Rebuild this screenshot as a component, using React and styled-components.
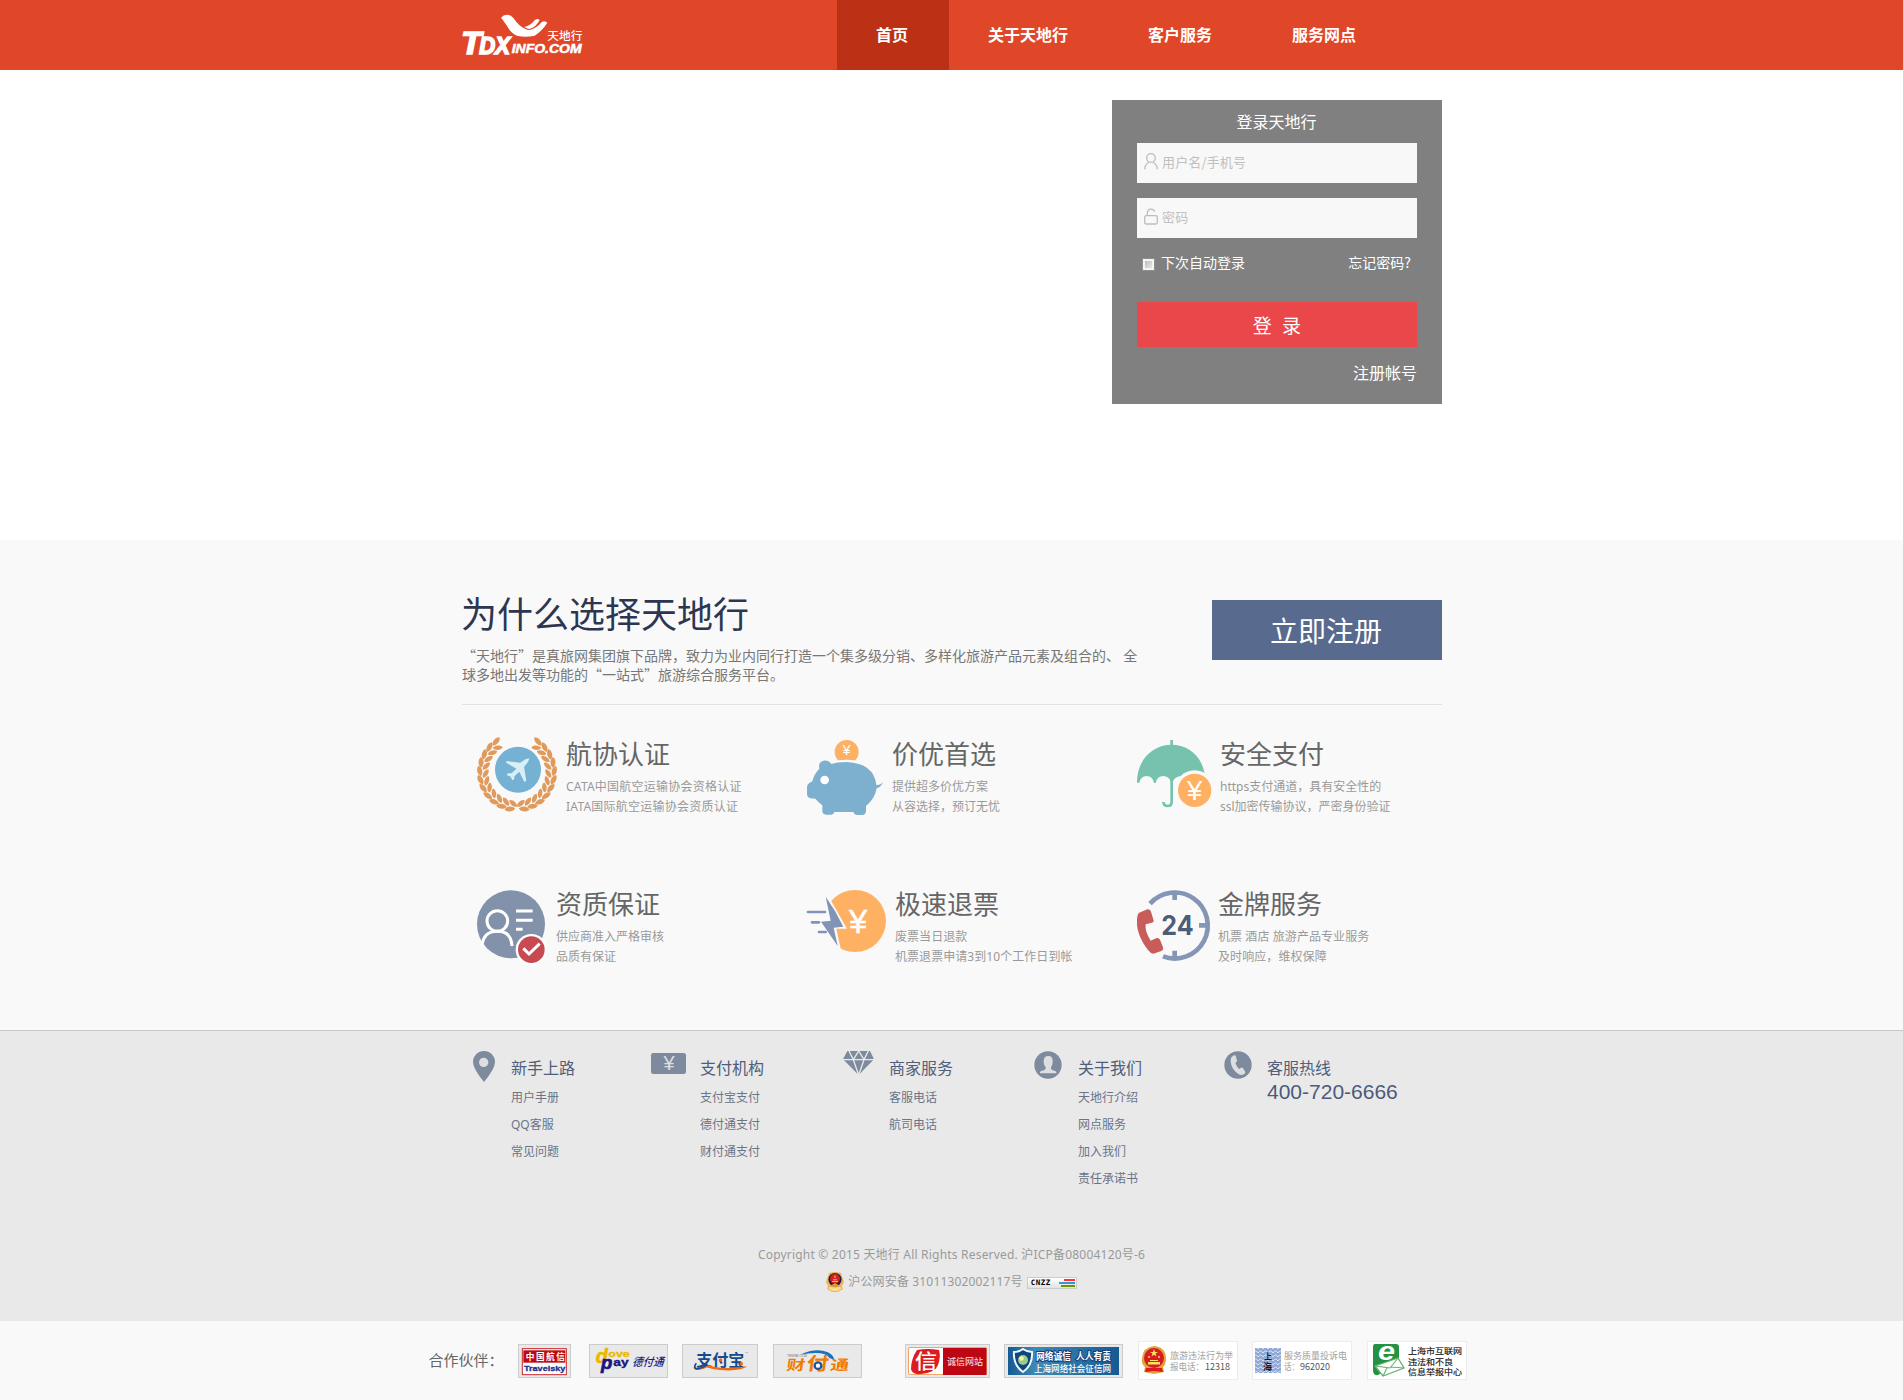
import React from "react";
import styled, { createGlobalStyle } from "styled-components";

const Global = createGlobalStyle`
  * { box-sizing: border-box; }
  body { margin: 0; background: #fff; font-family: "Noto Sans", "Noto Sans CJK SC", sans-serif; font-size: 12px; color: #666; }
  h1, h2, h3, p, ul { margin: 0; padding: 0; font-weight: 400; }
  ul { list-style: none; }
  a { color: inherit; text-decoration: none; }
  svg { display: block; flex: none; overflow: visible; }
`;

const CJK = `"Noto Sans CJK SC", "Noto Sans", sans-serif`;

const Container = styled.div`
  width: 980px;
  margin-left: calc(50% - 489.5px);
`;

/* ---------- header ---------- */
const Header = styled.header`
  height: 70px;
  background: #e04729;
`;
const HeaderInner = styled(Container)`
  display: flex;
  height: 70px;
`;
const LogoLink = styled.a`
  width: 375px;
  padding-top: 13px;
`;
const Nav = styled.nav`
  display: flex;
`;
const NavItem = styled.a`
  height: 70px;
  padding: 0 41px 0 39px;
  font: 700 16px/68px ${CJK};
  color: #fff;
  background: ${(p) => (p.$active ? "#bc3115" : "transparent")};
`;

/* ---------- login ---------- */
const Hero = styled.section`
  height: 470px;
  padding-top: 30px;
`;
const HeroInner = styled(Container)`
  display: flex;
  justify-content: flex-end;
`;
const LoginBox = styled.form`
  width: 330px;
  height: 304px;
  padding: 1px 25px 0;
  background: #808080;
  color: #fff;
`;
const LoginTitle = styled.h2`
  height: 42px;
  font: 400 16px/41px ${CJK};
  text-align: center;
  text-indent: -1px;
`;
const Field = styled.label`
  display: flex;
  height: 40px;
  margin-bottom: 15px;
  padding: 10px 7px;
  background: #f8f8f8;
`;
const FieldInput = styled.input`
  flex: 1;
  min-width: 0;
  height: 17px;
  margin-left: 4px;
  padding: 0;
  border: 0;
  outline: 0;
  background: transparent;
  font: 13px/17px ${CJK};
  letter-spacing: 0.15px;
  &::placeholder { color: #c0c0c0; opacity: 1; }
`;
const Options = styled.div`
  display: flex;
  align-items: center;
  height: 50px;
  margin-top: -15px;
  padding: 0 6px 2px 5px;
  font: 14px/20px ${CJK};
`;
const Check = styled.input`
  appearance: none;
  width: 13px;
  height: 13px;
  margin: 5px 6px 0 0;
  border: 1px solid #8e8f8f;
  outline: 2px solid #f4f4f4;
  outline-offset: -3px;
  background: linear-gradient(135deg, #aeb3b9, #f2f2f2);
`;
const Forgot = styled.a`
  margin-left: auto;
`;
const Submit = styled.button`
  display: block;
  width: 280px;
  height: 45px;
  margin-top: 14px;
  padding: 0;
  border: 0;
  background: #ea474b;
  color: #fff;
  font: 19px/40px ${CJK};
  word-spacing: 6px;
`;
const Register = styled.a`
  display: block;
  font: 16px/50px ${CJK};
  text-align: right;
`;

/* ---------- why ---------- */
const Why = styled.section`
  height: 490px;
  background: #f9f9f9;
`;
const Intro = styled.div`
  display: flex;
  justify-content: space-between;
  height: 165px;
  border-bottom: 1px solid #e2e2e2;
`;
const IntroTitle = styled.h1`
  margin: 47px 0 0 -1px;
  font: 400 36px/50px ${CJK};
  color: #2d3650;
`;
const IntroText = styled.p`
  margin-top: 9px;
  font: 14px/19px ${CJK};
  color: #777;
  white-space: pre;
`;
const JoinButton = styled.a`
  width: 230px;
  height: 60px;
  margin-top: 60px;
  padding-right: 2px;
  background: #586a8e;
  color: #fff;
  font: 28px/61px ${CJK};
  text-align: center;
`;
const Features = styled.div`
  display: grid;
  grid-template-columns: repeat(3, 330px);
  grid-template-rows: 150px 140px;
  padding: 35px 0 0 15px;
  margin-right: -25px;
`;
const Feature = styled.article`
  display: flex;
`;
const FeatureIcon = styled.div`
  width: ${(p) => p.$w}px;
  flex: none;
`;
const FeatureTitle = styled.h3`
  margin: -1px 0 10px;
  font: 400 26px/28px ${CJK};
  color: #666;
`;
const FeatureLine = styled.p`
  line-height: 20px;
  letter-spacing: ${(p) => p.$track || 0}px;
  color: #999;
`;

/* ---------- footer ---------- */
const Footer = styled.footer`
  height: 291px;
  border-top: 1px solid #c8c8c8;
  background: #e9e9e9;
`;
const Columns = styled(Container)`
  display: grid;
  grid-template-columns: repeat(5, 189px);
  height: 210px;
  padding-top: 20px;
`;
const Column = styled.div`
  display: flex;
`;
const ColumnIcon = styled.div`
  width: 49px;
  flex: none;
  padding-left: ${(p) => p.$left}px;
  padding-top: ${(p) => p.$top || 0}px;
`;
const ColumnTitle = styled.h3`
  margin: 4px 0 5px;
  font: 400 16px/24px ${CJK};
  color: #4f5e7b;
`;
const ColumnLink = styled.a`
  display: block;
  line-height: 27px;
  color: #6a7488;
`;
const Hotline = styled.p`
  margin-top: -4px;
  font: 21px/24px "Liberation Sans", sans-serif;
  color: #4a5b7c;
`;
const Legal = styled.p`
  display: flex;
  justify-content: center;
  align-items: center;
  height: 27px;
  line-height: 27px;
  letter-spacing: ${(p) => p.$track}px;
  color: #999;
  white-space: pre;
`;
const Record = styled.span`
  margin: 0 4px;
`;
const Cnzz = styled.span`
  display: flex;
  align-items: center;
  justify-content: space-between;
  width: 50px;
  height: 12px;
  margin-top: 2px;
  padding-left: 3px;
  border: 1px solid #ccc;
  background: linear-gradient(#fff, #e2e2e2);
  color: #000;
  font: 700 7.5px/10px "DejaVu Sans Mono", monospace;
  letter-spacing: 0.5px;
`;

/* ---------- partners ---------- */
const Partners = styled.section`
  display: flex;
  align-items: center;
  height: 79px;
  padding-left: calc(50% - 523px);
  background: #f9f9f9;
`;
const PartnerLabel = styled.span`
  width: 89px;
  padding-bottom: 2px;
  font: 15px/30px ${CJK};
  color: #666;
`;
const Partner = styled.a`
  flex: none;
  width: ${(p) => p.$w}px;
  height: ${(p) => (p.$light ? 39 : 34)}px;
  margin-right: ${(p) => p.$gap}px;
  border: 1px solid ${(p) => (p.$light ? "#ececec" : "#ccc")};
  background: ${(p) => (p.$light ? "#fff" : "#e9e9e9")};
`;

/* ---------- drawings ---------- */
const T = ({ children, ...p }) => (
  <text fontFamily='"Noto Sans CJK SC", sans-serif' lengthAdjust="spacingAndGlyphs" {...p}>{children}</text>
);
const L = ({ children, ...p }) => (
  <text fontFamily='"Liberation Sans", sans-serif' lengthAdjust="spacingAndGlyphs" {...p}>{children}</text>
);

const Logo = () => (
  <svg width="122" height="43" viewBox="66 39 366 129" fill="#fff">
    <path d="M183 54Q189 44 203 44Q213 45 220 54Q238 80 256 87Q266 92 276 88Q296 79 305 66Q315 60 322 68Q306 93 284 107Q258 113 234 108Q220 104 208 89Q192 63 183 54Z" />
    <path d="M253 81Q272 76 284 61Q292 54 299 60Q289 81 268 87Q258 86 253 81Z" />
    <L x="64" y="161" fontSize="94" fontWeight="700" fontStyle="italic" textLength="60" stroke="#fff" strokeWidth="5">T</L>
    <L x="118" y="161" fontSize="70" fontWeight="700" fontStyle="italic" textLength="92" stroke="#fff" strokeWidth="5">DX</L>
    <L x="215" y="158" fontSize="38" fontWeight="700" fontStyle="italic" textLength="210" stroke="#fff" strokeWidth="1.5">INFO.COM</L>
    <T x="322" y="121" fontSize="35" fontWeight="500" textLength="105">天地行</T>
  </svg>
);

const UserIcon = () => (
  <svg width="14" height="17" viewBox="0 0 14 17" fill="none" stroke="#bdbdbd" strokeWidth="1.3">
    <circle cx="7" cy="5" r="4.3" />
    <path d="M.7 16.2C.7 12.5 3 10.3 5 9.2M13.3 16.2C13.3 12.5 11 10.3 9 9.2" />
  </svg>
);
const LockIcon = () => (
  <svg width="14" height="17" viewBox="0 0 14 17" fill="none" stroke="#bdbdbd" strokeWidth="1.3">
    <rect x=".7" y="7.6" width="12.6" height="8.4" rx="1.5" />
    <path d="M3.4 7.4V4.4A3.7 3.7 0 0 1 10.6 3.7" />
  </svg>
);

const leafAngles = [236, 222.5, 209, 195.5, 182, 168.5, 155, 141.5, 128, 114.5, 101];
const Branch = () =>
  leafAngles.map((a) => {
    const r = (a * Math.PI) / 180;
    const at = (d, shift) => {
      const q = r + shift;
      return `translate(${201 + Math.cos(q) * d} ${577 + Math.sin(q) * d})`;
    };
    return (
      <g key={a}>
        <path transform={`${at(112, 0)} rotate(${a + 74})`} d="M-16 0C-9-10 9-10 16 0C9 10-9 10-16 0Z" />
        <path transform={`${at(94, -0.07)} rotate(${a + 120})`} d="M-15 0C-9-9 9-9 15 0C9 9-9 9-15 0Z" />
      </g>
    );
  });
const LaurelIcon = () => (
  <svg width="80" height="70" viewBox="81 480 240 210">
    <g fill="#e09a5b">
      <Branch />
      <g transform="translate(402 0) scale(-1 1)"><Branch /></g>
    </g>
    <circle cx="204" cy="569" r="69" fill="#74b1d3" />
    <path fill="#d8eff6" d="M238 535L234 546L222 561L229 602L223 606L208 575L193 589L193 597L187 601L182 590L170 585L174 580L185 580L199 566L167 547L171 543L211 548L226 538Z" />
  </svg>
);
const PigIcon = () => (
  <svg width="76" height="75" viewBox="1071 480 228 225">
    <path fill="#ffb163" d="M1164 541A36 36 0 1 1 1216 541Q1190 537 1164 541Z" />
    <L x="1190" y="526" fontSize="42" fill="#fff" textAnchor="middle">¥</L>
    <path fill="#7cb0ce" d="M1108 566Q1091 584 1087 604L1077 610Q1071 614 1071 622V642Q1072 653 1082 655L1096 656Q1106 668 1117 676V694Q1118 704 1128 704H1144Q1152 703 1153 696H1210Q1213 705 1222 705H1238Q1247 704 1248 694V678Q1275 656 1280 625Q1294 621 1299 606Q1292 616 1279 615Q1272 550 1190 546Q1160 546 1144 552Q1136 540 1120 542Q1104 546 1108 566Z" />
    <circle cx="1124" cy="600" r="13" fill="#fff" />
  </svg>
);
const UmbrellaIcon = () => (
  <svg width="74" height="68" viewBox="591 480 222 204">
    <path fill="#76c2ae" d="M591 608C590 540 638 494 694 494C750 494 795 534 797 608Q793 588 772 588Q751 588 746 608Q740 588 722 588Q703 590 697 608H693Q688 588 670 588Q651 588 647 609H642Q638 588 620 588Q602 588 598 608Z" />
    <path d="M695 480V665Q695 678 683 678Q671 678 670 666" fill="none" stroke="#76c2ae" strokeWidth="8" />
    <circle cx="764" cy="631" r="60" fill="#f9f9f9" />
    <circle cx="764" cy="631" r="50" fill="#ffb163" />
    <L x="764" y="659" fontSize="82" fill="#fff" textAnchor="middle">¥</L>
  </svg>
);
const IdIcon = () => (
  <svg width="70" height="75" viewBox="81 90 210 225">
    <circle cx="183" cy="193" r="102" fill="#8192aa" />
    <g fill="none" stroke="#fff" strokeWidth="9">
      <circle cx="142" cy="183" r="31" />
      <path d="M96 258Q100 214 142 214Q184 214 186 258M198 153H248M198 181H248M198 208H218" />
    </g>
    <circle cx="244" cy="269" r="47" fill="#fff" />
    <circle cx="244" cy="269" r="40" fill="#c74a52" />
    <path d="M220 265L237 282L269 251" fill="none" stroke="#fff" strokeWidth="9" />
  </svg>
);
const BoltIcon = () => (
  <svg width="79" height="62" viewBox="1071 90 237 186">
    <circle cx="1215" cy="183" r="93" fill="#ffb163" />
    <path fill="#f9f9f9" d="M1110 90L1120 86L1145 125L1191 206H1159L1172 266V280H1100Z" />
    <path fill="#8294b5" d="M1127 110L1155 153L1180 200L1151 203L1163 258L1113 185L1142 182Z" />
    <path d="M1074 156H1125M1086 187H1107M1107 216H1127" stroke="#8294b5" strokeWidth="8" strokeLinecap="round" />
    <L x="1224" y="219" fontSize="98" fill="#fff" stroke="#fff" strokeWidth="1.5" textAnchor="middle">¥</L>
  </svg>
);
const ServiceIcon = () => (
  <svg width="72" height="71" viewBox="591 90 216 213">
    <path d="M669 289A99 99 0 1 0 630 131M704 104V120M777 196H797M704 272V290" fill="none" stroke="#8495b5" strokeWidth="14" />
    <text x="664" y="225" fontFamily="Inter, sans-serif" fontSize="81" fontWeight="700" fill="#4d5c78" textLength="97" lengthAdjust="spacingAndGlyphs">24</text>
    <path fill="#c85c5b" d="M596 159L622 148Q631 147 634 158L641 182Q641 188 632 189L617 193Q614 214 632 242L648 235Q656 232 660 239L669 262Q671 270 664 273L640 281Q632 281 624 270Q584 219 592 169Z" />
  </svg>
);

const PinIcon = () => (
  <svg width="22" height="31" viewBox="69 63 66 93">
    <path fill="#7e8a9d" d="M102 156Q69 116 69 96A33 33 0 0 1 135 96Q135 116 102 156Z" />
    <circle cx="101" cy="97" r="14" fill="#dcdee1" />
  </svg>
);
const PayIcon = () => (
  <svg width="35" height="21" viewBox="603 69 105 63">
    <rect x="603" y="69" width="105" height="63" rx="7" fill="#7e8a9d" />
    <L x="657" y="121" fontSize="60" fill="#dcdee1" textAnchor="middle">¥</L>
  </svg>
);
const DiamondIcon = () => (
  <svg width="31" height="24" viewBox="1178 63 93 72">
    <path fill="#7e8a9d" d="M1191 63H1259L1271 88L1225 135L1178 88Z" />
    <path d="M1178 89H1271M1196 63L1209 89L1225 63L1241 89L1254 63M1209 89L1225 135L1241 89" fill="none" stroke="#e9e9e9" strokeWidth="4" />
  </svg>
);
const PersonIcon = () => (
  <svg width="28" height="28" viewBox="283 63 84 84">
    <circle cx="325" cy="105" r="41" fill="#7e8a9d" />
    <path fill="#dcdee1" d="M326 78Q340 78 339 94Q339 107 334 111Q333 118 338 120L348 124Q351 126 350 130H301Q300 126 303 124L314 120Q319 118 318 111Q312 107 312 94Q312 78 326 78Z" />
  </svg>
);
const PhoneIcon = () => (
  <svg width="28" height="28" viewBox="853 63 84 84">
    <circle cx="895" cy="105" r="41" fill="#7e8a9d" />
    <path fill="#dcdee1" d="M876 81L883 76Q888 75 889 80L892 92Q892 96 887 98Q890 109 898 117L904 113Q908 112 911 116L917 126Q917 131 912 133Q905 137 897 133Q876 119 873 96Q872 86 876 81Z" />
  </svg>
);

const PoliceBadge = () => (
  <svg width="18" height="20" viewBox="0 0 18 20">
    <path fill="#e9b659" d="M3 1Q9-1 15 1L18 10L16 14L17 17L12 20H6L1 17L2 14L0 10Z" />
    <path fill="#f7dc8c" d="M2 16Q5 14 9 16Q13 14 16 16L12 19H6Z" />
    <circle cx="9" cy="7.5" r="6.6" fill="#17204d" />
    <circle cx="9" cy="6.8" r="5" fill="#d5201b" />
    <path d="M6 9.5H12M7 7.8H11M9 3.4V6" stroke="#f2c14c" strokeWidth="1.1" />
    <path d="M5 13.2L9 11L13 13.2V15H5Z" fill="#d99a39" />
  </svg>
);
const CnzzBars = () => (
  <svg width="17" height="8" viewBox="0 0 17 8">
    <path fill="#f33" d="M5 0H16V2H5Z" />
    <path fill="#39c" d="M0 3H16V5H0Z" />
    <path fill="#690" d="M2 6H16V8H2Z" />
  </svg>
);

const Travelsky = () => (
  <svg width="51" height="32" viewBox="297 75 153 96">
    <rect x="307" y="86" width="132" height="78" fill="#fff" stroke="#c9282d" strokeWidth="3" />
    <rect x="310" y="91" width="126" height="37" fill="#bd0a10" />
    <T x="317" y="119" fontSize="26" fontWeight="700" fill="#fff" textLength="118" lengthAdjust="spacing">中国航信</T>
    <L x="312" y="154" fontSize="24" fontWeight="700" fill="#20318d" stroke="#20318d" textLength="124">Travelsky</L>
  </svg>
);
const DovePay = () => (
  <svg width="77" height="32" viewBox="510 75 231 96">
    <L x="527" y="128" fontSize="62" fontWeight="700" fontStyle="italic" fill="#ecb800" stroke="#ecb800" strokeWidth="2" textLength="36">d</L>
    <L x="565" y="111" fontSize="29" fontWeight="700" fill="#ecb800" stroke="#ecb800" textLength="64">ove</L>
    <L x="543" y="148" fontSize="54" fontWeight="700" fontStyle="italic" fill="#17157f" stroke="#17157f" strokeWidth="2" textLength="34">p</L>
    <L x="580" y="137" fontSize="30" fontWeight="700" fill="#17157f" stroke="#17157f" textLength="46">ay</L>
    <T x="0" y="0" fontSize="34" fontWeight="500" fill="#17157f" textLength="94" transform="translate(636 137) skewX(-18)">德付通</T>
  </svg>
);
const Alipay = () => (
  <svg width="74" height="32" viewBox="789 75 222 96">
    <T x="829" y="139" fontSize="48" fontWeight="700" fill="#164a91" textLength="144">支付宝</T>
    <path d="M826 132Q818 148 834 146Q850 141 864 134Q902 151 982 139Q966 153 914 151Q880 150 862 142Q840 153 826 149Q816 144 826 132Z" fill="#ec6b13" />
    <path d="M863 134Q843 147 828 146Q820 141 829 130" fill="none" stroke="#164a91" strokeWidth="5" />
    <circle cx="902" cy="120" r="5" fill="#ec6b13" /><circle cx="964" cy="131" r="5" fill="#ec6b13" />
    <L x="975" y="102" fontSize="9" fill="#777">™</L>
  </svg>
);
const Tenpay = () => (
  <svg width="87" height="32" viewBox="1062 75 261 96">
    <path d="M1140 104Q1188 82 1222 96Q1240 104 1243 119L1228 114Q1216 91 1140 104Z" fill="#1c71b8" />
    <T transform="translate(1098 151) skewX(-8)" fontSize="42" fontWeight="700" fill="#f07c00" textLength="56">财</T>
    <T transform="translate(1158 151) skewX(-8)" fontSize="54" fontWeight="700" fill="#f07c00" textLength="66">付</T>
    <T transform="translate(1229 151) skewX(-8)" fontSize="42" fontWeight="700" fill="#f07c00" textLength="56">通</T>
    <circle cx="1194" cy="137" r="10" fill="#fff" stroke="#1b559b" strokeWidth="7" />
    <L x="1101" y="112" fontSize="10" fill="#777" textLength="60">TENPAY.COM</L>
  </svg>
);
const Honest = () => (
  <svg width="83" height="32" viewBox="0 0 83 32">
    <rect x="2.5" y="2.5" width="78" height="27" rx="1.5" fill="#fff" stroke="#f2a36a" />
    <path fill="#bd0712" d="M37 3H80.5V30H37Z" />
    <path fill="#dc1c20" d="M11 5Q22 3 33 5Q35 12 32 20Q29 28 15 29Q6 30 5 24Q5 14 11 5Z" />
    <T x="9" y="23.500" fontSize="20" fontWeight="500" fill="#fff" textLength="22">信</T>
    <T x="41" y="20" fontSize="9.500" fill="#ffe9e9" textLength="36">诚信网站</T>
  </svg>
);
const CreditSite = () => (
  <svg width="117" height="32" viewBox="0 0 117 32">
    <defs>
      <linearGradient id="sea" x1="0" x2="1"><stop offset="0" stopColor="#145a94" /><stop offset=".25" stopColor="#3f8ab5" /><stop offset="1" stopColor="#155b92" /></linearGradient>
    </defs>
    <rect x="3" y="2" width="111" height="28" fill="url(#sea)" />
    <path d="M9 7Q14 7 18 4Q22 7 27 7Q28 20 18 27Q8 20 9 7Z" fill="#0c4780" stroke="#f1f7fb" strokeWidth="2" />
    <circle cx="18" cy="15" r="5" fill="#9ccc8a" /><circle cx="16.500" cy="13.500" r="2.200" fill="#f4f8a5" />
    <T x="31" y="14.500" fontSize="10" fontWeight="700" fill="#fff" stroke="#123e7d" strokeWidth="2" paintOrder="stroke" textLength="35">网络诚信</T>
    <T x="71" y="14.500" fontSize="10" fontWeight="700" fill="#fff" stroke="#123e7d" strokeWidth="2" paintOrder="stroke" textLength="35">人人有责</T>
    <T x="29" y="26.500" fontSize="9" fontWeight="500" fill="#fff" textLength="77">上海网络社会征信网</T>
  </svg>
);
const Tourism = () => (
  <svg width="98" height="37" viewBox="0 0 98 37">
    <path fill="#e1a53a" d="M15 4Q27 5 27 17Q27 22 24 25L25 30L15 32L5 30L6 25Q2 22 3 16Q4 5 15 4Z" />
    <circle cx="15" cy="16" r="10" fill="#d81d1c" />
    <path fill="#d81d1c" d="M7 26H23L24 30L15 29L6 30Z" />
    <path fill="#ffe16a" d="M15 7L16 10H19L16.500 11.600L17.500 14.500L15 12.800L12.500 14.500L13.500 11.600L11 10H14ZM9 20H21V22.500H9ZM11 18H19V19H11Z" />
    <circle cx="10" cy="15" r="1" fill="#ffe16a" /><circle cx="20" cy="15" r="1" fill="#ffe16a" />
    <T x="31" y="16.500" fontSize="9" fill="#a0a0a0" textLength="63">旅游违法行为举</T>
    <T x="31" y="28" fontSize="9" fill="#a0a0a0" textLength="34">报电话：</T>
    <T x="66" y="28" fontSize="9" fill="#555" textLength="25">12318</T>
  </svg>
);
const Complaint = () => (
  <svg width="98" height="37" viewBox="0 0 98 37">
    <defs>
      <pattern id="waves" width="5" height="4" patternUnits="userSpaceOnUse">
        <rect width="5" height="4" fill="#92a8d6" /><path d="M0 3Q2.500-1 5 3" fill="none" stroke="#dce4f5" />
      </pattern>
    </defs>
    <rect x="2" y="6" width="26" height="25" fill="url(#waves)" />
    <T x="11" y="16.500" fontSize="8" fontWeight="700" fill="#171b2b">上</T>
    <T x="10" y="28" fontSize="9" fontWeight="700" fill="#171b2b">海</T>
    <T x="31" y="16.500" fontSize="9" fill="#a0a0a0" textLength="63">服务质量投诉电</T>
    <T x="31" y="28" fontSize="9" fill="#a0a0a0" textLength="15">话：</T>
    <T x="47" y="28" fontSize="9" fill="#555" textLength="30">962020</T>
  </svg>
);
const Report = () => (
  <svg width="98" height="37" viewBox="0 0 98 37">
    <path fill="#239341" d="M7 2H28Q31 2 31 5V19L10 33Q5 34 5 28V5Q5 2 7 2Z" />
    <L x="10" y="18" fontSize="25" fontWeight="700" fontStyle="italic" fill="#fff" textLength="17">e</L>
    <path d="M7 24L30 16L36 26L15 34Z" fill="#fff" stroke="#62b36c" strokeWidth="1.300" />
    <path d="M7 24L22 26L30 16M15 34L19 26M36 26L23 25" fill="none" stroke="#62b36c" strokeWidth="1.100" />
    <g fill="#111" stroke="#111" strokeWidth=".15">
      <T x="40" y="11.500" fontSize="8.500" textLength="54">上海市互联网</T>
      <T x="40" y="22.500" fontSize="8.500" textLength="45">违法和不良</T>
      <T x="40" y="33" fontSize="8.500" textLength="54">信息举报中心</T>
    </g>
  </svg>
);

/* ---------- data ---------- */
const nav = ["首页", "关于天地行", "客户服务", "服务网点"];
const features = [
  { w: 89, track: 0.24, Icon: LaurelIcon, title: "航协认证", lines: ["CATA中国航空运输协会资格认证", "IATA国际航空运输协会资质认证"] },
  { w: 85, Icon: PigIcon, title: "价优首选", lines: ["提供超多价优方案", "从容选择，预订无忧"] },
  { w: 83, Icon: UmbrellaIcon, title: "安全支付", lines: ["https支付通道，具有安全性的", "ssl加密传输协议，严密身份验证"] },
  { w: 79, Icon: IdIcon, title: "资质保证", lines: ["供应商准入严格审核", "品质有保证"] },
  { w: 88, track: 0.06, Icon: BoltIcon, title: "极速退票", lines: ["废票当日退款", "机票退票申请3到10个工作日到帐"] },
  { w: 81, track: 0.08, Icon: ServiceIcon, title: "金牌服务", lines: ["机票 酒店 旅游产品专业服务", "及时响应，维权保障"] },
];
const columns = [
  { left: 11, Icon: PinIcon, title: "新手上路", links: ["用户手册", "QQ客服", "常见问题"] },
  { left: 0, top: 2, Icon: PayIcon, title: "支付机构", links: ["支付宝支付", "德付通支付", "财付通支付"] },
  { left: 3, Icon: DiamondIcon, title: "商家服务", links: ["客服电话", "航司电话"] },
  { left: 5, Icon: PersonIcon, title: "关于我们", links: ["天地行介绍", "网点服务", "加入我们", "责任承诺书"] },
  { left: 6, Icon: PhoneIcon, title: "客服热线", links: [], hotline: "400-720-6666" },
];
const partners = [
  { w: 53, gap: 18, Art: Travelsky },
  { w: 79, gap: 14, Art: DovePay },
  { w: 76, gap: 15, Art: Alipay },
  { w: 89, gap: 43, Art: Tenpay },
  { w: 85, gap: 14, Art: Honest },
  { w: 119, gap: 15, Art: CreditSite },
  { w: 100, gap: 14, light: true, Art: Tourism },
  { w: 100, gap: 15, light: true, Art: Complaint },
  { w: 100, gap: 0, light: true, Art: Report },
];

export default function App() {
  return (
    <>
      <Global />
      <Header>
        <HeaderInner>
          <LogoLink href="#"><Logo /></LogoLink>
          <Nav>
            {nav.map((n, i) => <NavItem key={n} href="#" $active={i === 0}>{n}</NavItem>)}
          </Nav>
        </HeaderInner>
      </Header>

      <Hero>
        <HeroInner>
          <LoginBox>
            <LoginTitle>登录天地行</LoginTitle>
            <Field><UserIcon /><FieldInput placeholder="用户名/手机号" /></Field>
            <Field><LockIcon /><FieldInput type="password" placeholder="密码" /></Field>
            <Options>
              <Check type="checkbox" id="auto" />
              <label htmlFor="auto">下次自动登录</label>
              <Forgot href="#">忘记密码?</Forgot>
            </Options>
            <Submit type="button">登 录</Submit>
            <Register href="#">注册帐号</Register>
          </LoginBox>
        </HeroInner>
      </Hero>

      <Why>
        <Container>
          <Intro>
            <div>
              <IntroTitle>为什么选择天地行</IntroTitle>
              <IntroText>{"“天地行”是真旅网集团旗下品牌，致力为业内同行打造一个集多级分销、多样化旅游产品元素及组合的、 全\n球多地出发等功能的“一站式”旅游综合服务平台。"}</IntroText>
            </div>
            <JoinButton href="#">立即注册</JoinButton>
          </Intro>
          <Features>
            {features.map(({ w, track, Icon, title, lines }) => (
              <Feature key={title}>
                <FeatureIcon $w={w}><Icon /></FeatureIcon>
                <div>
                  <FeatureTitle>{title}</FeatureTitle>
                  {lines.map((l) => <FeatureLine key={l} $track={track}>{l}</FeatureLine>)}
                </div>
              </Feature>
            ))}
          </Features>
        </Container>
      </Why>

      <Footer>
        <Columns>
          {columns.map(({ left, top, Icon, title, links, hotline }) => (
            <Column key={title}>
              <ColumnIcon $left={left} $top={top}><Icon /></ColumnIcon>
              <div>
                <ColumnTitle>{title}</ColumnTitle>
                {hotline && <Hotline>{hotline}</Hotline>}
                {links.map((l) => <ColumnLink key={l} href="#">{l}</ColumnLink>)}
              </div>
            </Column>
          ))}
        </Columns>
        <Legal $track={0.2}>Copyright © 2015 天地行 All Rights Reserved. 沪ICP备08004120号-6</Legal>
        <Legal $track={0.15}>
          <PoliceBadge />
          <Record>沪公网安备 31011302002117号</Record>
          <Cnzz>CNZZ<CnzzBars /></Cnzz>
        </Legal>
      </Footer>

      <Partners>
        <PartnerLabel>合作伙伴：</PartnerLabel>
        {partners.map(({ w, gap, light, Art }, i) => (
          <Partner key={i} href="#" $w={w} $gap={gap} $light={light}><Art /></Partner>
        ))}
      </Partners>
    </>
  );
}
